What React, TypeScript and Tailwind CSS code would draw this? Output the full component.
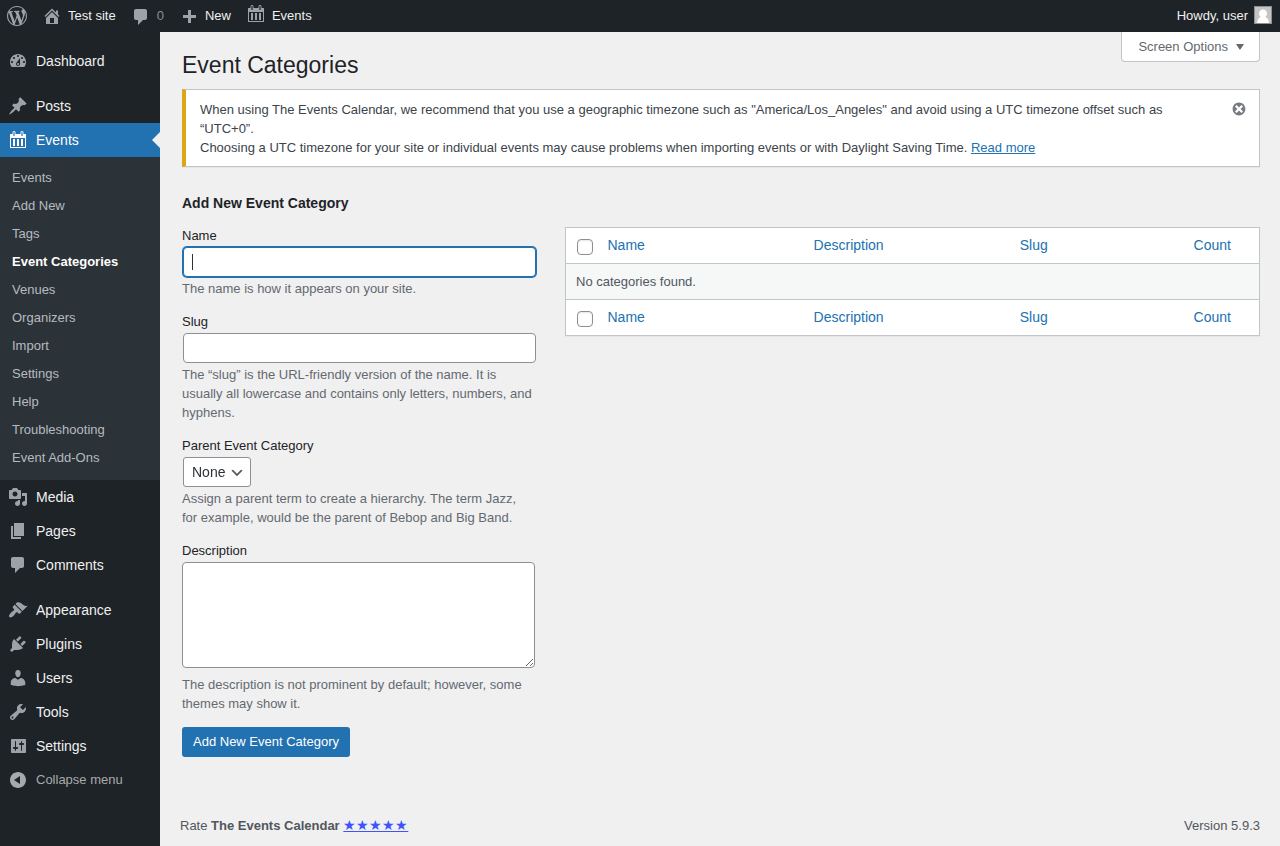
import React from "react";

const ICONS = {
  wordpress:
    "M20 10c0-5.51-4.49-10-10-10C4.48 0 0 4.49 0 10c0 5.52 4.48 10 10 10 5.51 0 10-4.48 10-10zM7.78 15.37L4.37 6.22c.55-.02 1.17-.08 1.17-.08.5-.06.44-1.13-.06-1.11 0 0-1.45.11-2.37.11-.18 0-.37 0-.58-.01C4.12 2.69 6.87 1.11 10 1.11c2.33 0 4.45.87 6.05 2.34-.68-.11-1.65.39-1.65 1.58 0 .74.45 1.36.9 2.1.35.61.55 1.36.55 2.46 0 1.49-1.4 5-1.4 5l-3.03-8.37c.54-.02.82-.17.82-.17.5-.05.44-1.25-.06-1.22 0 0-1.44.12-2.38.12-.87 0-2.33-.12-2.33-.12-.5-.03-.56 1.2-.06 1.22l.92.08 1.26 3.41zM17.41 10c.24-.64.74-1.87.43-4.25.7 1.29 1.05 2.71 1.05 4.25 0 3.29-1.73 6.24-4.4 7.78.97-2.59 1.94-5.2 2.92-7.78zM6.1 18.09C3.12 16.65 1.11 13.53 1.11 10c0-1.3.23-2.48.72-3.59C3.25 10.3 4.67 14.2 6.1 18.09zm4.03-6.63l2.58 6.98c-.86.29-1.76.45-2.71.45-.79 0-1.57-.11-2.29-.33.81-2.38 1.62-4.74 2.42-7.1z",
  home: "M16 8.5l1.53 1.53-1.06 1.06L10 4.6l-6.47 6.49-1.06-1.06L10 2.5l4 4v-2h2v4zm-6-2.46l6 5.99V18H4v-5.97zM12 17v-5H8v5h4z",
  plus: "M17 9v3h-5v5H9v-5H4V9h5V4h3v5z",
  dashboard:
    "M3.76 16h12.48c1.1-1.37 1.76-3.11 1.76-5 0-4.42-3.58-8-8-8s-8 3.58-8 8c0 1.89.66 3.63 1.76 5zM10 4c.55 0 1 .45 1 1s-.45 1-1 1-1-.45-1-1 .45-1 1-1zM6 6c.55 0 1 .45 1 1s-.45 1-1 1-1-.45-1-1 .45-1 1-1zm8 0c.55 0 1 .45 1 1s-.45 1-1 1-1-.45-1-1 .45-1 1-1zm-5.37 5.55L12 7v6c0 1.1-.9 2-2 2s-2-.9-2-2c0-.57.24-1.08.63-1.45zM4 10c.55 0 1 .45 1 1s-.45 1-1 1-1-.45-1-1 .45-1 1-1zm12 0c.55 0 1 .45 1 1s-.45 1-1 1-1-.45-1-1 .45-1 1-1zm-5 3c0-.55-.45-1-1-1s-1 .45-1 1 .45 1 1 1 1-.45 1-1z",
  pin: "M10.44 3.02l1.82-1.82 6.36 6.35-1.83 1.82c-1.05-.68-2.48-.57-3.41.36l-.75.75c-.92.93-1.04 2.35-.35 3.41l-1.83 1.82-2.41-2.41-2.8 2.79c-.42.42-3.38 2.71-3.8 2.29s1.86-3.39 2.28-3.81l2.79-2.79L4.1 9.36l1.83-1.82c1.05.69 2.48.57 3.4-.36l.75-.75c.93-.92 1.05-2.35.36-3.41z",
  calendar:
    "M2 4h2.500V2.500a1.500 1.500 0 0 1 3 0V4h5V2.500a1.500 1.500 0 0 1 3 0V4H18v14H2zM5.400 2.500V6h1.200V2.500a.6.6 0 0 0-1.200 0zM13.400 2.500V6h1.200V2.500a.6.6 0 0 0-1.200 0zM3 8v9h14V8zM5 9h2v7H5zM9 9h2v7H9zM13 9h2v7h-2z",
  media:
    "M13 11V4c0-.55-.45-1-1-1h-1.67L9 1H5L3.67 3H2c-.55 0-1 .45-1 1v7c0 .55.45 1 1 1h10c.55 0 1-.45 1-1zM7 4.5c1.38 0 2.5 1.12 2.5 2.5S8.38 9.5 7 9.5 4.5 8.38 4.5 7 5.62 4.5 7 4.5zM14 6h5v10.5c0 1.38-1.12 2.5-2.5 2.5S14 17.88 14 16.5s1.12-2.5 2.5-2.5c.17 0 .34.02.5.05V9h-3V6zm-4 8.05V13h2v3.5c0 1.38-1.12 2.5-2.5 2.5S7 17.88 7 16.5 8.12 14 9.5 14c.17 0 .34.02.5.05z",
  page: "M6 15V2h10v13H6zm-1 1h8v2H3V5h2v11z",
  comment:
    "M5 2h9c1.1 0 2 .9 2 2v7c0 1.1-.9 2-2 2h-2l-5 5v-5H5c-1.1 0-2-.9-2-2V4c0-1.1.9-2 2-2z",
  appearance:
    "M14.48 11.06L7.41 3.99l1.5-1.5c.5-.56 2.3-.47 3.51.32 1.21.8 1.43 1.28 2.91 2.1 1.18.64 2.45 1.26 4.45.85zm-.71.71L6.7 4.7 4.93 6.47c-.39.39-.39 1.02 0 1.41l1.06 1.06c.39.39.39 1.03 0 1.42-.6.6-1.43 1.11-2.21 1.69-.35.26-.7.53-1.01.84C1.43 14.23.4 16.08 1.4 17.07c.99 1 2.84-.03 4.18-1.36.31-.31.58-.66.85-1.02.57-.78 1.08-1.61 1.69-2.21.39-.39 1.02-.39 1.41 0l1.06 1.06c.39.39 1.02.39 1.41 0z",
  plugins:
    "M13.11 4.36L9.87 7.6 8 5.73l3.24-3.24c.35-.34 1.05-.2 1.56.32.52.51.66 1.21.31 1.55zm-8 1.77l.91-1.12 9.01 9.01-1.19.84c-.71.71-2.63 1.16-3.82 1.16H6.14L4.9 17.26c-.59.59-1.54.59-2.12 0-.59-.58-.59-1.53 0-2.12l1.24-1.24v-3.88c0-1.13.4-3.19 1.09-3.89zm7.26 3.97l3.24-3.24c.34-.35 1.04-.21 1.55.31.52.51.66 1.21.31 1.55l-3.24 3.25z",
  users:
    "M10 9.25c-2.27 0-2.73-3.44-2.73-3.44C7 4.02 7.82 2 9.97 2c2.16 0 2.98 2.02 2.71 3.81 0 0-.41 3.44-2.68 3.44zm0 2.57L12.72 10c2.39 0 4.52 2.33 4.52 4.53v2.49s-3.65 1.13-7.24 1.13c-3.65 0-7.24-1.13-7.24-1.13v-2.49c0-2.25 1.94-4.48 4.47-4.48z",
  tools:
    "M16.68 9.77c-1.34 1.34-3.3 1.67-4.95.99l-5.41 6.52c-.99.99-2.59.99-3.58 0s-.99-2.59 0-3.57l6.52-5.42c-.68-1.65-.35-3.61.99-4.95 1.28-1.28 3.12-1.62 4.72-1.06l-2.89 2.89 2.82 2.82 2.86-2.87c.53 1.58.18 3.39-1.08 4.65zM3.81 16.21c.4.39 1.04.39 1.43 0 .4-.4.4-1.04 0-1.43-.39-.4-1.03-.4-1.43 0-.39.39-.39 1.03 0 1.43z",
  settings:
    "M18 16V4c0-.55-.45-1-1-1H4c-.55 0-1 .45-1 1v12c0 .55.45 1 1 1h13c.55 0 1-.45 1-1zM8 11h1c.55 0 1 .45 1 1s-.45 1-1 1H8v1.5c0 .28-.22.5-.5.5s-.5-.22-.5-.5V13H6c-.55 0-1-.45-1-1s.45-1 1-1h1V5.5c0-.28.22-.5.5-.5s.5.22.5.5V11zm5-2h-1c-.55 0-1-.45-1-1s.45-1 1-1h1V5.5c0-.28.22-.5.5-.5s.5.22.5.5V7h1c.55 0 1 .45 1 1s-.45 1-1 1h-1v5.5c0 .28-.22.5-.5.5s-.5-.22-.5-.5V9z",
  collapse:
    "M10 2c4.42 0 8 3.58 8 8s-3.58 8-8 8-8-3.58-8-8 3.58-8 8-8zm2 12V6l-6 4z",
  dismiss:
    "M10 2c4.42 0 8 3.58 8 8s-3.58 8-8 8-8-3.58-8-8 3.58-8 8-8zm5 11l-3-3 3-3-2-2-3 3-3-3-2 2 3 3-3 3 2 2 3-3 3 3z",
  arrowDown: "M15 8l-4.03 6L7 8h8z",
};

type IconName = keyof typeof ICONS;

const Icon: React.FC<{ name: IconName; className?: string }> = ({
  name,
  className = "size-5",
}) => (
  <svg
    viewBox="0 0 20 20"
    fill="currentColor"
    fillRule="evenodd"
    aria-hidden="true"
    className={`shrink-0 ${className}`}
  >
    <path d={ICONS[name]} />
  </svg>
);

const menuGroups: { icon: IconName; label: string }[][] = [
  [{ icon: "dashboard", label: "Dashboard" }],
  [
    { icon: "pin", label: "Posts" },
    { icon: "calendar", label: "Events" },
    { icon: "media", label: "Media" },
    { icon: "page", label: "Pages" },
    { icon: "comment", label: "Comments" },
  ],
  [
    { icon: "appearance", label: "Appearance" },
    { icon: "plugins", label: "Plugins" },
    { icon: "users", label: "Users" },
    { icon: "tools", label: "Tools" },
    { icon: "settings", label: "Settings" },
  ],
];

const eventLinks = [
  "Events",
  "Add New",
  "Tags",
  "Event Categories",
  "Venues",
  "Organizers",
  "Import",
  "Settings",
  "Help",
  "Troubleshooting",
  "Event Add-Ons",
];

const AdminBar = () => (
  <header className="flex h-8 items-center justify-between bg-[#1d2327] pr-2 pl-[7px] text-[#f0f0f1]">
    <nav className="flex items-center">
      <a href="#" aria-label="About WordPress" className="mr-[15px] text-[#9ca2a7]">
        <Icon name="wordpress" />
      </a>
      <a href="#" className="mr-[15px] flex items-center gap-1.5">
        <Icon name="home" className="size-5 text-[#9ca2a7]" />
        Test site
      </a>
      <a href="#" className="mr-[15px] flex items-center gap-1.5 text-[#8c8f94]">
        <Icon name="comment" className="mt-0.5 size-5 text-[#9ca2a7]" />
        0
      </a>
      <a href="#" className="mr-[15px] flex items-center gap-1.5">
        <Icon name="plus" className="size-5 text-[#9ca2a7]" />
        New
      </a>
      <a href="#" className="flex items-center gap-1.5">
        <Icon name="calendar" className="mb-1 size-5 text-[#9ca2a7]" />
        Events
      </a>
    </nav>
    <a href="#" className="flex items-center gap-1.5">
      Howdy, user
      <svg viewBox="0 0 18 18" className="mb-0.5 size-[18px]" aria-hidden="true">
        <path fill="#8c8f94" d="M0 0h18v18H0z" />
        <path fill="#c5c5c5" d="M1 1h16v16H1z" />
        <path
          fill="#fff"
          d="M9 3.5c2.5 0 4 1.700 4 4 0 1.500-.7 2.800-1.700 3.500 2 .7 3.500 2.500 3.700 6H3c.2-3.500 1.700-5.300 3.700-6C5.700 10.300 5 9 5 7.500c0-2.300 1.500-4 4-4z"
        />
      </svg>
    </a>
  </header>
);

const Sidebar = () => (
  <aside className="w-40 shrink-0 bg-[#1d2327] pt-3 text-sm text-[#f0f0f1]">
    {menuGroups.map((group, i) => (
      <ul key={i} className="mb-[11px] last-of-type:mb-0">
        {group.map(({ icon, label }) => {
          const active = label === "Events";
          return (
            <li key={label}>
              <a
                href="#"
                className={`relative flex h-[34px] items-center gap-2 pl-2 ${
                  active ? "bg-[#2271b1] text-white" : ""
                }`}
              >
                <Icon
                  name={icon}
                  className={active ? "size-5" : "size-5 text-[#9ca2a7]"}
                />
                {label}
                {active && (
                  <span className="absolute top-1/2 right-0 -translate-y-1/2 border-8 border-transparent border-r-[#f0f0f0]" />
                )}
              </a>
              {active && (
                <ul className="bg-[#2c3338] pt-[7px] pb-2 text-[13px]">
                  {eventLinks.map((link) => (
                    <li key={link}>
                      <a
                        href="#"
                        className={`flex h-7 items-center pl-3 ${
                          link === "Event Categories"
                            ? "font-semibold text-white"
                            : "text-[#b5bbc1]"
                        }`}
                      >
                        {link}
                      </a>
                    </li>
                  ))}
                </ul>
              )}
            </li>
          );
        })}
      </ul>
    ))}
    <button
      type="button"
      className="flex h-[34px] w-full items-center gap-2 pl-2 text-[13px] text-[#a7aaad]"
    >
      <Icon name="collapse" />
      Collapse menu
    </button>
  </aside>
);

const Field: React.FC<{
  id: string;
  label: string;
  help: string;
  children: React.ReactNode;
}> = ({ id, label, help, children }) => (
  <div className="mb-3.5">
    <label htmlFor={id} className="block leading-5 text-[#1d2327]">
      {label}
    </label>
    {children}
    <p className="mt-0.5 pr-1 leading-[19px] text-[#646970]">{help}</p>
  </div>
);

const AddCategoryForm = () => (
  <form className="w-[355px] shrink-0">
    <h2 className="mb-[13px] text-sm leading-5 font-semibold text-[#1d2327]">
      Add New Event Category
    </h2>
    <Field id="name" label="Name" help="The name is how it appears on your site.">
      <div className="relative m-px w-[353px]">
        <input
          id="name"
          type="text"
          autoFocus
          className="block h-[30px] w-full rounded border border-[#2271b1] bg-white px-2 text-sm text-[#2c3338] caret-transparent shadow-[0_0_0_1px_#2271b1] outline-none"
        />
        {/* Steady text cursor */}
        <span className="pointer-events-none absolute inset-y-[7px] left-[9px] w-px bg-[#2c3338]" />
      </div>
    </Field>
    <Field
      id="slug"
      label="Slug"
      help="The “slug” is the URL-friendly version of the name. It is usually all lowercase and contains only letters, numbers, and hyphens."
    >
      <input
        id="slug"
        type="text"
        className="m-px block h-[30px] w-[353px] rounded border border-[#8c8f94] bg-white px-2 text-sm text-[#2c3338]"
      />
    </Field>
    <Field
      id="parent"
      label="Parent Event Category"
      help="Assign a parent term to create a hierarchy. The term Jazz, for example, would be the parent of Bebop and Big Band."
    >
      <div className="relative m-px w-[68px]">
        <select
          id="parent"
          className="block h-[30px] w-full appearance-none rounded-[3px] border border-[#8c8f94] bg-white pl-2 text-sm text-[#2c3338]"
        >
          <option>None</option>
        </select>
        <svg
          viewBox="0 0 20 20"
          aria-hidden="true"
          className="pointer-events-none absolute top-2 right-1.5 size-4"
        >
          <path d="M5 6l5 5 5-5 2 1-7 7-7-7 2-1z" fill="#555" />
        </svg>
      </div>
    </Field>
    <Field
      id="description"
      label="Description"
      help="The description is not prominent by default; however, some themes may show it."
    >
      <textarea
        id="description"
        className="mt-px mb-[7px] block h-[106px] w-[353px] rounded border border-[#8c8f94] bg-white px-2 py-0.5 text-sm text-[#2c3338]"
      />
    </Field>
    <button
      type="submit"
      className="h-[30px] rounded-[3px] bg-[#2271b1] px-[11px] text-[13px] text-white"
    >
      Add New Event Category
    </button>
  </form>
);

const ColumnHeadings: React.FC<{ id: string }> = ({ id }) => (
  <tr className="h-9 bg-white text-sm text-[#2271b1]">
    <td className="w-8 pl-[11px]">
      <input
        id={id}
        type="checkbox"
        aria-label="Select All"
        className="mt-0.5 block size-4 appearance-none rounded border border-[#8c8f94] bg-white shadow-[inset_0_1px_2px_rgba(0,0,0,0.1)]"
      />
    </td>
    <th scope="col" className="w-[29.7%] pb-0.5 pl-2.5 text-left font-normal">
      <a href="#">Name</a>
    </th>
    <th scope="col" className="w-[29.7%] pb-0.5 pl-2.5 text-left font-normal">
      <a href="#">Description</a>
    </th>
    <th scope="col" className="pb-0.5 pl-2.5 text-left font-normal">
      <a href="#">Slug</a>
    </th>
    <th scope="col" className="w-[74px] pr-5 pb-0.5 text-center font-normal">
      <a href="#">Count</a>
    </th>
  </tr>
);

const CategoriesTable = () => (
  <table className="mt-[34px] w-full table-fixed border border-[#c3c4c7] shadow-[0_1px_1px_rgba(0,0,0,0.04)]">
    <thead>
      <ColumnHeadings id="select-all-top" />
    </thead>
    <tbody>
      <tr className="h-9 border-y border-[#c3c4c7] bg-[#f6f7f7]">
        <td colSpan={5} className="pl-2.5 text-[#50575e]">
          No categories found.
        </td>
      </tr>
    </tbody>
    <tfoot>
      <ColumnHeadings id="select-all-bottom" />
    </tfoot>
  </table>
);

const App = () => (
  <div className="flex min-h-screen flex-col bg-[#f0f0f0] font-['Liberation_Sans',Arial,sans-serif] text-[13px] text-[#3c434a]">
    <AdminBar />
    <div className="flex grow">
      <Sidebar />
      <div className="flex min-w-0 grow flex-col pr-5 pl-5">
        <main className="grow pl-0.5">
          <div className="flex h-[57px] items-start justify-between">
            <h1 className="pt-[17px] text-[23px] leading-8 text-[#1d2327]">
              Event Categories
            </h1>
            <button
              type="button"
              className="flex h-[30px] items-center gap-px rounded-b border border-t-0 border-[#c3c4c7] bg-white pr-2.5 pl-4 text-[#646970]"
            >
              Screen Options
              <Icon name="arrowDown" className="mb-0.5 size-5" />
            </button>
          </div>

          <div className="flex items-start justify-between border border-l-4 border-[#c3c4c7] border-l-[#dba617] bg-white pt-2.5 pr-3 pb-[9px] pl-3.5 shadow-[0_1px_1px_rgba(0,0,0,0.04)]">
            <p className="max-w-[1000px] leading-[19px]">
              When using The Events Calendar, we recommend that you use a
              geographic timezone such as "America/Los_Angeles" and avoid using
              a UTC timezone offset such as “UTC+0”.
              <br />
              Choosing a UTC timezone for your site or individual events may
              cause problems when importing events or with Daylight Saving Time.{" "}
              <a href="#" className="text-[#2271b1] underline">
                Read more
              </a>
            </p>
            <button
              type="button"
              aria-label="Dismiss this notice"
              className="pt-px text-[#787c82]"
            >
              <Icon name="dismiss" className="size-4" />
            </button>
          </div>

          <div className="flex items-start gap-7 pt-[26px]">
            <AddCategoryForm />
            <CategoriesTable />
          </div>
        </main>

        <footer className="flex items-center justify-between pb-2.5 leading-5 text-[#50575e]">
          <p>
            Rate <strong className="font-semibold">The Events Calendar</strong>{" "}
            <a href="#" className="text-sm leading-5 text-[#3d54ff] underline">
              ★★★★★
            </a>
          </p>
          <p>Version 5.9.3</p>
        </footer>
      </div>
    </div>
  </div>
);

export default App;
